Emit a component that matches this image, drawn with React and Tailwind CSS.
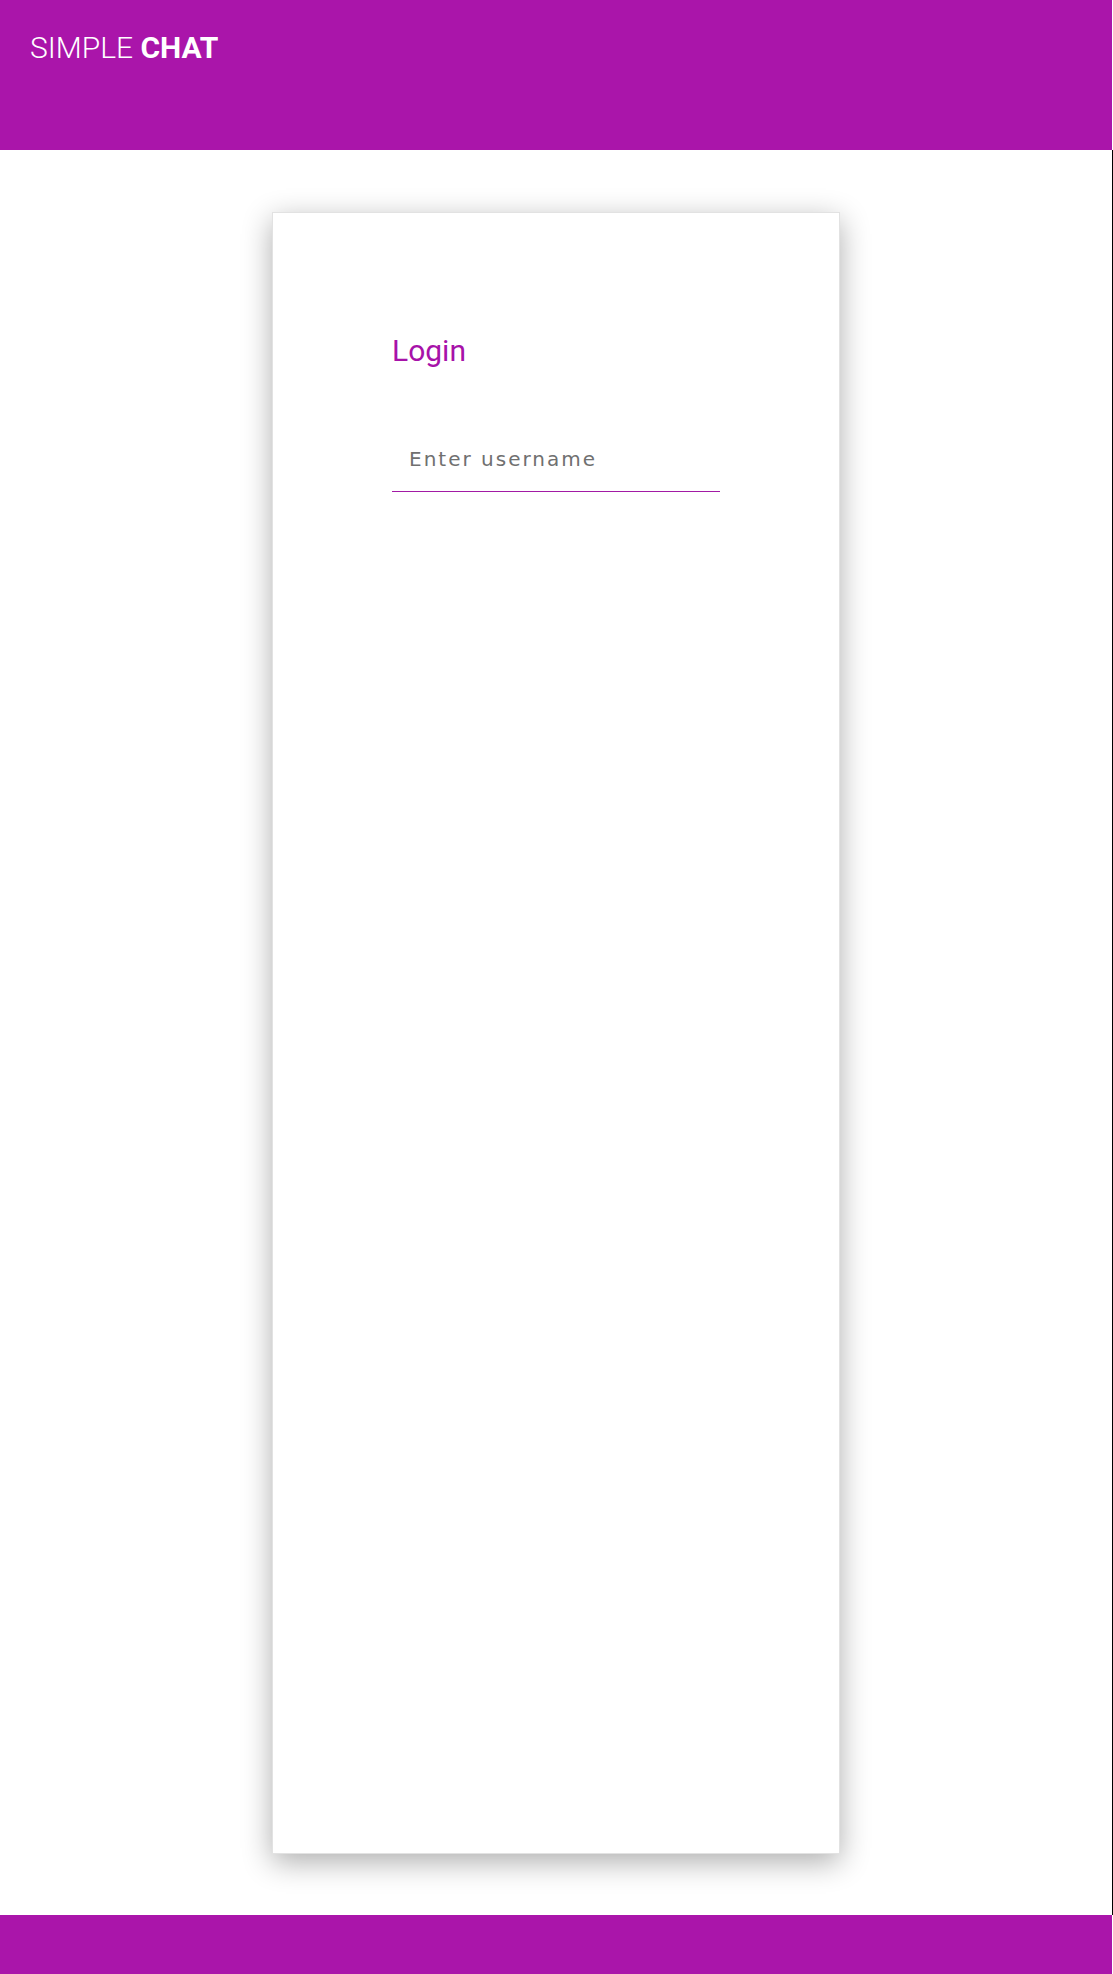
import { useState } from 'react';

export default function App() {
  const [username, setUsername] = useState('');

  return (
    <div className="min-h-screen bg-white font-['Roboto',sans-serif]">
      {/* Header */}
      <header className="w-[1112px] h-[150px] bg-[#aa15aa] pl-[30px] pt-[30px]">
        <h1 className="text-[30px] leading-[35px] text-white font-light">
          SIMPLE <span className="font-bold">CHAT</span>
        </h1>
      </header>

      {/* Main */}
      <main className="border-r border-black pt-[62px] pb-[61px] flex justify-center">
        <div className="w-[568px] h-[1642px] bg-white border border-[#e2e2e2] shadow-[0_8px_28px_rgba(0,0,0,0.32)] pt-[120px] flex justify-center">
          <form className="w-[328px]" onSubmit={e => e.preventDefault()}>
            <h2 className="text-[30px] leading-[35px] text-[#a712a9] font-normal">Login</h2>
            <input
              type="text"
              value={username}
              onChange={e => setUsername(e.target.value)}
              placeholder="Enter username"
              className="mt-[60px] w-full pl-[17px] pr-2 py-5 text-[20px] leading-[23px] tracking-[2px]
                         font-['DejaVu_Sans',sans-serif] text-[#555] placeholder:text-[#707070]
                         border-b border-[#a21aa5] outline-none bg-transparent"
            />
          </form>
        </div>
      </main>

      {/* Footer */}
      <footer className="w-[1112px] h-[60px] bg-[#aa15aa]" />
    </div>
  );
}
